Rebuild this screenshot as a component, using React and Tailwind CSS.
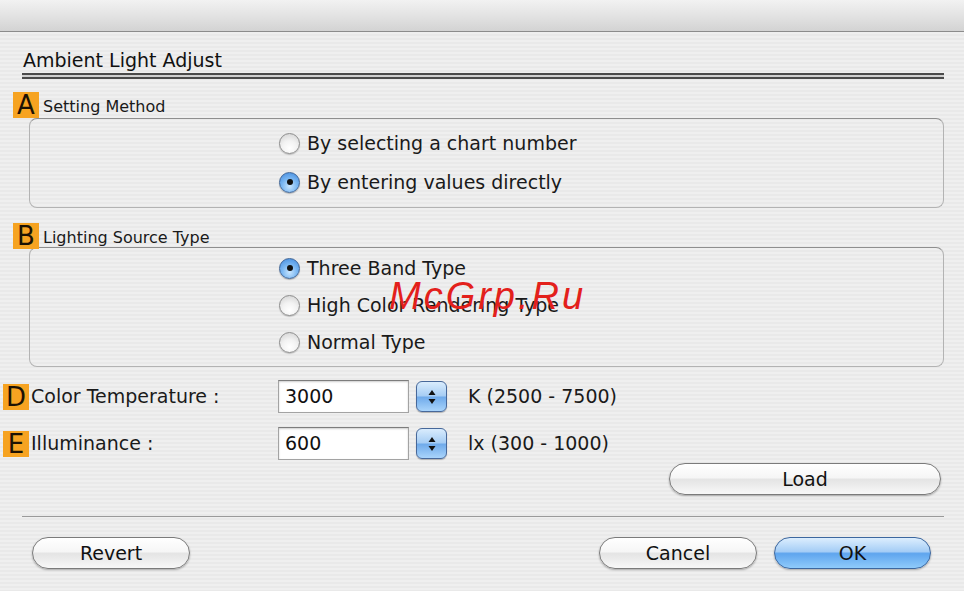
import React from 'react';

const Badge = ({ letter }) => (
  <span className="flex h-[26px] w-[26px] items-center justify-center bg-[#f6a321] text-[26px] leading-none text-[#1c1204]">
    {letter}
  </span>
);

const Radio = ({ checked, label }) => (
  <div className="flex h-[22px] items-center">
    {checked ? (
      <span className="flex h-[21px] w-[21px] shrink-0 items-center justify-center rounded-full border border-[#3f6597] bg-[radial-gradient(circle_at_50%_70%,#c9e6ff_0%,#7cb8f2_45%,#3d86dc_100%)] shadow-[0_1px_1px_rgba(0,0,0,0.25)]">
        <span className="h-[6px] w-[6px] rounded-full bg-[#111]" />
      </span>
    ) : (
      <span className="h-[21px] w-[21px] shrink-0 rounded-full border border-[#8d8d8d] bg-[radial-gradient(circle_at_50%_75%,#ffffff_0%,#f2f2f2_45%,#cfcfcf_100%)] shadow-[0_1px_1px_rgba(0,0,0,0.2)]" />
    )}
    <span className="ml-[7px] whitespace-nowrap text-[19px] leading-none text-[#1a1a1a]">{label}</span>
  </div>
);

const Stepper = () => (
  <span className="ml-[7px] flex h-[31px] w-[31px] items-center justify-center rounded-[6px] border border-[#47689a] bg-[linear-gradient(to_bottom,#d9ecfd_0%,#a6cdf4_48%,#6faaea_52%,#a9d4fb_100%)] shadow-[0_1px_1px_rgba(0,0,0,0.25)]">
    <svg width="10" height="18" viewBox="0 0 10 18">
      <path d="M5 2 L8.5 7 L1.5 7 Z" fill="#111" />
      <path d="M5 16 L8.5 11 L1.5 11 Z" fill="#111" />
    </svg>
  </span>
);

const Field = ({ badge, label, value, range, className = '' }) => (
  <div className={`flex h-[33px] items-center pl-[3px] ${className}`}>
    <Badge letter={badge} />
    <span className="ml-[2px] w-[247px] whitespace-nowrap text-[19px] leading-none text-[#1a1a1a]">{label}</span>
    <div className="flex h-[33px] w-[131px] items-center border border-[#a3a3a3] border-t-[#7d7d7d] bg-white pl-[6px] text-[19px] leading-none text-[#111] shadow-[inset_0_1px_2px_rgba(0,0,0,0.2)]">
      {value}
    </div>
    <Stepper />
    <span className="ml-[21px] whitespace-nowrap text-[19px] leading-none text-[#1a1a1a]">{range}</span>
  </div>
);

const Pill = ({ children, primary, className = '' }) => (
  <button
    className={`flex h-[32px] items-center justify-center rounded-full border text-[19px] leading-none text-[#111] shadow-[0_1px_2px_rgba(0,0,0,0.3)] ${
      primary
        ? 'border-[#3c679f] bg-[linear-gradient(to_bottom,#dceefe_0%,#a5cdf6_45%,#5fa5ee_52%,#8fcbfb_100%)]'
        : 'border-[#7b7b7b] bg-[linear-gradient(to_bottom,#ffffff_0%,#f6f6f6_45%,#e4e4e4_52%,#f8f8f8_100%)]'
    } ${className}`}
  >
    {children}
  </button>
);

export default function App() {
  return (
    <div
      className="relative h-[591px] w-[964px] overflow-hidden bg-[repeating-linear-gradient(to_bottom,#efefef_0px,#efefef_2px,#e9e9e9_2px,#e9e9e9_4px)]"
      style={{ fontFamily: '"DejaVu Sans", "Noto Sans", sans-serif' }}
    >
      {/* title bar */}
      <div className="h-[32px] border-b border-[#8c8c8c] bg-[linear-gradient(to_bottom,#f2f2f2_0%,#e3e3e3_50%,#d3d3d3_100%)]" />

      <div className="ml-[22px] mr-[20px] mt-[18px]">
        <div className="h-[20px] whitespace-nowrap pl-[1px] text-[19px] leading-[20px] text-[#111]">Ambient Light Adjust</div>
        <div className="mt-[3px] h-[6px] border-y-2 border-[#4a4a4a] bg-[#cfcfcf]" />
      </div>

      {/* A */}
      <div className="ml-[13px] mt-[13px] flex h-[26px] items-end">
        <Badge letter="A" />
        <span className="mb-[3px] ml-[4px] whitespace-nowrap text-[16px] leading-none text-[#1a1a1a]">Setting Method</span>
      </div>
      <div className="ml-[29px] flex h-[90px] w-[915px] flex-col gap-[17px] rounded-[8px] border border-[#b3b3b3] border-t-[#8e8e8e] pl-[249px] pt-[13px]">
        <Radio label="By selecting a chart number" />
        <Radio checked label="By entering values directly" />
      </div>

      {/* B */}
      <div className="ml-[13px] mt-[15px] flex h-[26px] items-end">
        <Badge letter="B" />
        <span className="mb-[3px] ml-[4px] whitespace-nowrap text-[16px] leading-none text-[#1a1a1a]">Lighting Source Type</span>
      </div>
      <div className="-mt-[2px] ml-[29px] flex h-[120px] w-[915px] flex-col gap-[15px] rounded-[8px] border border-[#b3b3b3] border-t-[#8e8e8e] pl-[249px] pt-[9px]">
        <Radio checked label="Three Band Type" />
        <Radio label="High Color Rendering Type" />
        <Radio label="Normal Type" />
      </div>

      <Field className="mt-[13px]" badge="D" label="Color Temperature :" value="3000" range="K (2500 - 7500)" />
      <Field className="mt-[14px]" badge="E" label="Illuminance :" value="600" range="lx (300 - 1000)" />

      <div className="mr-[23px] mt-[3px] flex justify-end">
        <Pill className="w-[272px]">Load</Pill>
      </div>

      <div className="ml-[22px] mr-[20px] mt-[21px] h-px bg-[#9a9a9a]" />

      <div className="mt-[20px] flex pl-[32px] pr-[33px]">
        <Pill className="w-[158px]">Revert</Pill>
        <Pill className="ml-auto w-[158px]">Cancel</Pill>
        <Pill primary className="ml-[17px] w-[157px]">OK</Pill>
      </div>

      {/* watermark */}
      <div
        className="absolute left-[389px] top-[277px] whitespace-nowrap text-[38px] italic leading-none tracking-[3px] text-[#e3201b]"
        style={{ fontFamily: '"Liberation Sans", Arial, sans-serif' }}
      >
        McGrp.Ru
      </div>
    </div>
  );
}
